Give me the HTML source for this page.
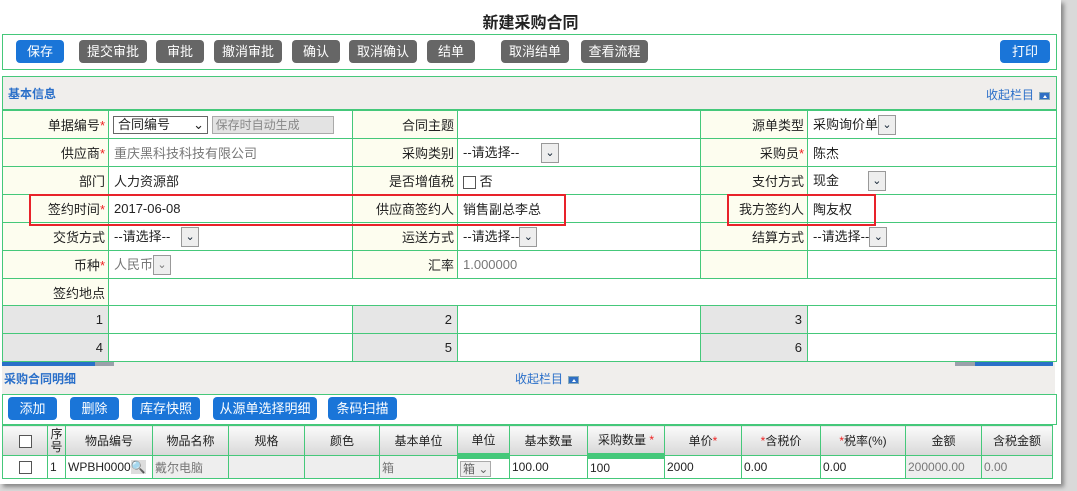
<!DOCTYPE html>
<html><head><meta charset="utf-8"><style>
*{margin:0;padding:0;box-sizing:border-box}
body{width:1077px;height:491px;background:#d9d9d9;font-family:"Liberation Sans","Noto Sans CJK SC",sans-serif;font-size:12px;color:#222;position:relative;overflow:hidden}
.a{position:absolute}
.page{left:0;top:0;width:1061px;height:484px;background:#fff;box-shadow:3px 3px 4px #888}
.box{border:1px solid #45c87a}
.btn{position:absolute;top:40px;height:23px;border-radius:4px;background:#666;color:#fff;font-size:13px;text-align:center;line-height:23px}
.bl{background:#1a75d8}
.hd{background:#f0eeec}
.ttl{color:#2a6fc9;font-weight:bold;font-size:12px}
.lk{color:#2a6fc9;font-size:12px}
.ic{display:inline-block;width:11px;height:8px;background:#2f6fc4;border:1px solid #8ab;vertical-align:middle;margin-left:5px;position:relative}
.ic:after{content:"";position:absolute;left:3px;top:2px;border:2px solid transparent;border-bottom:3px solid #fff;border-top:0}
table{border-collapse:collapse;position:absolute;table-layout:fixed}
td{border:1px solid #45c87a;font-size:13px;padding:0 5px;white-space:nowrap;overflow:hidden}
td.l{background:#fdfdef;text-align:right;padding-right:3px}
td.n{background:#e6e6e6;text-align:right}
.r{color:#e22}
.sel{display:inline-block;width:18px;height:20px;border:1px solid #999;background:#eee;vertical-align:middle;text-align:center;font-size:11px;line-height:18px;color:#123}
.g{color:#777}
.gh td{background:linear-gradient(#fafafa,#d8d8d8);text-align:center;font-size:12px;padding:0;height:30px}
.gr td{font-size:12px;padding:0 2px;height:23px}
.cb{display:inline-block;width:13px;height:13px;border:1px solid #555;background:#fff;vertical-align:middle}
.rb{position:absolute;border:2px solid #e8222a}
</style></head><body>
<div class="a page"></div>
<div class="a" style="left:0;top:9px;width:1061px;text-align:center;font-size:16px;font-weight:bold">新建采购合同</div>
<div class="a box" style="left:2px;top:34px;width:1055px;height:36px"></div>
<div class="btn bl" style="left:16px;width:48px">保存</div>
<div class="btn" style="left:79px;width:68px">提交审批</div>
<div class="btn" style="left:156px;width:48px">审批</div>
<div class="btn" style="left:214px;width:68px">撤消审批</div>
<div class="btn" style="left:292px;width:48px">确认</div>
<div class="btn" style="left:349px;width:68px">取消确认</div>
<div class="btn" style="left:427px;width:48px">结单</div>
<div class="btn" style="left:501px;width:68px">取消结单</div>
<div class="btn" style="left:581px;width:67px">查看流程</div>
<div class="btn bl" style="left:1000px;width:50px">打印</div>
<div class="a box hd" style="left:2px;top:76px;width:1055px;height:34px"></div>
<div class="a ttl" style="left:8px;top:85px">基本信息</div>
<div class="a lk" style="left:986px;top:86px">收起栏目<span class="ic"></span></div>
<table style="left:2px;top:110px;width:1055px">
<colgroup><col style="width:106px"><col style="width:244px"><col style="width:105px"><col style="width:243px"><col style="width:107px"><col></colgroup>
<tr style="height:28px"><td class="l">单据编号<span class="r">*</span></td><td style="padding-left:4px"><span style="display:inline-block;width:95px;height:18px;border:1px solid #666;font-size:13px;line-height:16px;padding-left:4px;vertical-align:middle">合同编号<span style="float:right;margin-right:3px">⌄</span></span> <span style="display:inline-block;width:122px;height:18px;border:1px solid #aaa;background:#e3e3e3;color:#888;font-size:12px;line-height:16px;padding-left:3px;vertical-align:middle">保存时自动生成</span></td><td class="l">合同主题</td><td></td><td class="l">源单类型</td><td>采购询价单<span class="sel">⌄</span></td></tr>
<tr style="height:28px"><td class="l">供应商<span class="r">*</span></td><td class="g">重庆黑科技科技有限公司</td><td class="l">采购类别</td><td>--请选择-- &nbsp; &nbsp; &nbsp;<span class="sel">⌄</span></td><td class="l">采购员<span class="r">*</span></td><td>陈杰</td></tr>
<tr style="height:28px"><td class="l">部门</td><td>人力资源部</td><td class="l">是否增值税</td><td><span class="cb"></span> 否</td><td class="l">支付方式</td><td>现金 &nbsp; &nbsp; &nbsp; &nbsp;<span class="sel">⌄</span></td></tr>
<tr style="height:28px"><td class="l">签约时间<span class="r">*</span></td><td>2017-06-08</td><td class="l">供应商签约人</td><td>销售副总李总</td><td class="l">我方签约人</td><td>陶友权</td></tr>
<tr style="height:28px"><td class="l">交货方式</td><td>--请选择-- &nbsp; <span class="sel">⌄</span></td><td class="l">运送方式</td><td>--请选择--<span class="sel">⌄</span></td><td class="l">结算方式</td><td>--请选择--<span class="sel">⌄</span></td></tr>
<tr style="height:28px"><td class="l">币种<span class="r">*</span></td><td class="g">人民币<span class="sel" style="color:#777">⌄</span></td><td class="l">汇率</td><td class="g">1.000000</td><td class="l"></td><td></td></tr>
<tr style="height:27px"><td class="l">签约地点</td><td colspan="5"></td></tr>
<tr style="height:28px"><td class="n">1</td><td></td><td class="n">2</td><td></td><td class="n">3</td><td></td></tr>
<tr style="height:28px"><td class="n">4</td><td></td><td class="n">5</td><td></td><td class="n">6</td><td></td></tr>
</table>
<div class="rb" style="left:29px;top:194px;width:537px;height:32px"></div>
<div class="rb" style="left:727px;top:194px;width:149px;height:32px"></div>
<div class="a hd" style="left:2px;top:362px;width:1053px;height:32px"></div>
<div class="a" style="left:2px;top:362px;width:93px;height:4px;background:#2a70c8"></div>
<div class="a" style="left:95px;top:362px;width:19px;height:4px;background:#9aa0aa"></div>
<div class="a" style="left:955px;top:362px;width:20px;height:4px;background:#9aa0aa"></div>
<div class="a" style="left:975px;top:362px;width:78px;height:4px;background:#2a70c8"></div>
<div class="a ttl" style="left:4px;top:370px">采购合同明细</div>
<div class="a lk" style="left:515px;top:370px">收起栏目<span class="ic"></span></div>
<div class="a box" style="left:2px;top:394px;width:1055px;height:31px"></div>
<div class="btn bl" style="left:8px;top:397px;width:49px">添加</div>
<div class="btn bl" style="left:70px;top:397px;width:49px">删除</div>
<div class="btn bl" style="left:132px;top:397px;width:68px">库存快照</div>
<div class="btn bl" style="left:213px;top:397px;width:104px">从源单选择明细</div>
<div class="btn bl" style="left:328px;top:397px;width:69px">条码扫描</div>
<table style="left:2px;top:425px;width:1050px">
<colgroup><col style="width:45px"><col style="width:18px"><col style="width:87px"><col style="width:76px"><col style="width:76px"><col style="width:75px"><col style="width:78px"><col style="width:52px"><col style="width:78px"><col style="width:77px"><col style="width:77px"><col style="width:79px"><col style="width:85px"><col style="width:76px"><col style="width:71px"></colgroup>
<tr class="gh"><td><span class="cb"></span></td><td style="line-height:13px">序<br>号</td><td>物品编号</td><td>物品名称</td><td>规格</td><td>颜色</td><td>基本单位</td><td style="border-bottom:6px solid #45c87a">单位</td><td>基本数量</td><td style="border-bottom:6px solid #45c87a">采购数量 <span class="r">*</span></td><td>单价<span class="r">*</span></td><td><span class="r">*</span>含税价</td><td><span class="r">*</span>税率(%)</td><td>金额</td><td>含税金额</td></tr>
<tr class="gr"><td style="text-align:center"><span class="cb"></span></td><td>1</td><td>WPBH0000<span style="background:#ddd;color:#57a">🔍</span></td><td style="background:#eee" class="g">戴尔电脑</td><td style="background:#eee"></td><td style="background:#eee"></td><td style="background:#eee" class="g">箱</td><td><span style="border:1px solid #aaa;background:#eee;color:#666;padding:0 2px">箱 ⌄</span></td><td>100.00</td><td>100</td><td>2000</td><td>0.00</td><td>0.00</td><td style="background:#eee" class="g">200000.00</td><td style="background:#eee" class="g">0.00</td></tr>
</table>
</body></html>
